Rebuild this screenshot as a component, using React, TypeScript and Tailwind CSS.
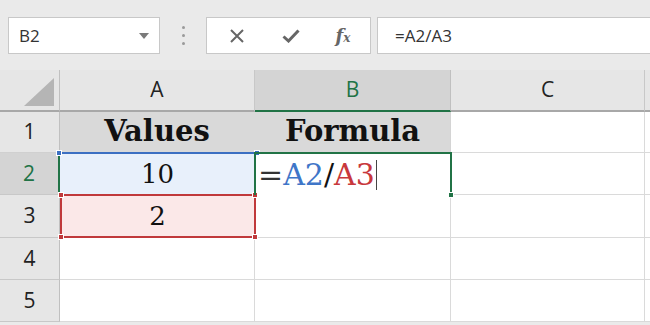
import React from "react";

const serif = { fontFamily: '"DejaVu Serif", "Liberation Serif", serif' };
const sans = { fontFamily: '"Open Sans", "Noto Sans", sans-serif' };

function Handle({ className }: { className: string }) {
  return <div className={`absolute w-[6px] h-[6px] border border-white ${className}`} />;
}

export default function App() {
  const rows = [42, 41, 42, 43, 42, 42];
  return (
    <div className="w-[650px] h-[325px] overflow-hidden bg-[#eaeaea] relative" style={sans}>
      {/* Top bar */}
      <div className="h-[70px] flex items-start pt-[17px]">
        <div className="ml-[8px] w-[152px] h-[37px] bg-white border border-[#c8c8c8] flex items-center justify-between pl-[10px] pr-[10px]">
          <span className="text-[17px] text-[#333]">B2</span>
          <svg width="10" height="6" viewBox="0 0 10 6"><path d="M0 0h10L5 6z" fill="#7a7a7a" /></svg>
        </div>
        <div className="w-[46px] h-[37px] flex flex-col items-center justify-center gap-[5px]">
          <div className="w-[3px] h-[3px] rounded-full bg-[#9a9a9a]" />
          <div className="w-[3px] h-[3px] rounded-full bg-[#9a9a9a]" />
          <div className="w-[3px] h-[3px] rounded-full bg-[#9a9a9a]" />
        </div>
        <div className="w-[165px] h-[37px] bg-white border border-[#c8c8c8] flex items-center">
          <div className="w-[58px] flex justify-center pl-[2px]">
            <svg width="14" height="14" viewBox="0 0 14 14"><path d="M1 1L13 13M13 1L1 13" stroke="#666" strokeWidth="2" /></svg>
          </div>
          <div className="w-[52px] flex justify-center">
            <svg width="18" height="14" viewBox="0 0 18 14"><path d="M1.5 7.5L6.5 12L16.5 1.5" stroke="#666" strokeWidth="3" fill="none" /></svg>
          </div>
          <div className="w-[52px] flex justify-center">
            <span className="text-[#666] italic font-bold text-[18px] leading-none" style={serif}>f<span className="text-[12px]">x</span></span>
          </div>
        </div>
        <div className="ml-[6px] flex-1 h-[37px] bg-white border border-[#c8c8c8] border-r-0 flex items-center pl-[17px]">
          <span className="text-[17px] text-[#333]">=A2/A3</span>
        </div>
      </div>

      {/* Grid */}
      <div className="relative">
        <div
          className="grid"
          style={{
            gridTemplateColumns: "60px 195px 196px 194px 1fr",
            gridTemplateRows: rows.map((r) => r + "px").join(" "),
          }}
        >
          {/* header row */}
          <div className="bg-[#e6e6e6] border-r border-[#c0c0c0] border-b-2 border-b-[#a8a8a8] relative">
            <svg className="absolute left-[24px] top-[8px]" width="30" height="28" viewBox="0 0 30 28"><path d="M30 0V28H0z" fill="#b5b5b5" /></svg>
          </div>
          <div className="bg-[#e6e6e6] border-r border-[#c8c8c8] border-b-2 border-b-[#a8a8a8] flex items-center justify-center text-[21px] text-[#222]">A</div>
          <div className="bg-[#d4d4d4] border-r border-[#c0c0c0] border-b-2 border-b-[#217346] flex items-center justify-center text-[21px] text-[#217346]">B</div>
          <div className="bg-[#e6e6e6] border-r border-[#c8c8c8] border-b-2 border-b-[#a8a8a8] flex items-center justify-center text-[21px] text-[#222]">C</div>
          <div className="bg-[#e6e6e6] border-b-2 border-b-[#a8a8a8]" />

          {/* row 1 */}
          <div className="bg-[#e6e6e6] border-r border-[#c0c0c0] border-b border-b-[#d0d0d0] flex items-center justify-center text-[21px] text-[#222]">1</div>
          <div className="bg-[#d9d9d9] border-r border-b border-[#d9d9d9] flex items-center justify-center text-[29px] font-bold text-[#111]" style={serif}>Values</div>
          <div className="bg-[#d9d9d9] border-r border-b border-[#d4d4d4] flex items-center justify-center text-[29px] font-bold text-[#111]" style={serif}>Formula</div>
          <div className="bg-white border-r border-b border-[#dadada]" />
          <div className="bg-white border-b border-[#dadada]" />

          {/* row 2 */}
          <div className="bg-[#d4d4d4] border-r-2 border-r-[#217346] border-b border-b-[#c8c8c8] flex items-center justify-center text-[21px] text-[#217346]">2</div>
          <div className="bg-[#e8f0fb] flex items-center justify-center text-[26px] text-[#111]" style={serif}>10</div>
          <div className="bg-white flex items-center pl-[3px] pt-[2px] text-[30px] leading-none" style={serif}>
            <span className="text-[#333]">=</span>
            <span className="text-[#3f76c8]">A2</span>
            <span className="text-[#111]">/</span>
            <span className="text-[#c8383c]">A3</span>
            <span className="inline-block w-[1px] h-[30px] bg-[#444] ml-[1px]" />
          </div>
          <div className="bg-white border-r border-b border-[#dadada]" />
          <div className="bg-white border-b border-[#dadada]" />

          {/* row 3 */}
          <div className="bg-[#e6e6e6] border-r border-[#c0c0c0] border-b border-b-[#c8c8c8] flex items-center justify-center text-[21px] text-[#222]">3</div>
          <div className="bg-[#fbe8e8] flex items-center justify-center text-[26px] text-[#111]" style={serif}>2</div>
          <div className="bg-white border-r border-b border-[#dadada]" />
          <div className="bg-white border-r border-b border-[#dadada]" />
          <div className="bg-white border-b border-[#dadada]" />

          {/* row 4 */}
          <div className="bg-[#e6e6e6] border-r border-[#c0c0c0] border-b border-b-[#c8c8c8] flex items-center justify-center text-[21px] text-[#222]">4</div>
          <div className="bg-white border-r border-b border-[#dadada]" />
          <div className="bg-white border-r border-b border-[#dadada]" />
          <div className="bg-white border-r border-b border-[#dadada]" />
          <div className="bg-white border-b border-[#dadada]" />

          {/* row 5 */}
          <div className="bg-[#e6e6e6] border-r border-[#c0c0c0] border-b border-b-[#c8c8c8] flex items-center justify-center text-[21px] text-[#222]">5</div>
          <div className="bg-white border-r border-b border-[#dadada]" />
          <div className="bg-white border-r border-b border-[#dadada]" />
          <div className="bg-white border-r border-b border-[#dadada]" />
          <div className="bg-white border-b border-[#dadada]" />
        </div>

        {/* Selection overlays */}
        <div className="absolute left-[60px] top-[82px] w-[196px] h-[43px] border-t-2 border-[#3b6fc2]">
          <Handle className="-left-[4px] -top-[4px] bg-[#3b6fc2]" />
          <Handle className="-right-[4px] -top-[4px] bg-[#3b6fc2]" />
        </div>
        <div className="absolute left-[60px] top-[124px] w-[196px] h-[44px] border-2 border-[#c0393b]">
          <Handle className="-left-[4px] -top-[4px] bg-[#c0393b]" />
          <Handle className="-right-[4px] -top-[4px] bg-[#c0393b]" />
          <Handle className="-left-[4px] -bottom-[4px] bg-[#c0393b]" />
          <Handle className="-right-[4px] -bottom-[4px] bg-[#c0393b]" />
        </div>
        <div className="absolute left-[254px] top-[82px] w-[198px] h-[43px] border-2 border-b-0 border-[#217346]">
          <Handle className="-right-[4px] -bottom-[3px] bg-[#217346]" />
        </div>
      </div>
    </div>
  );
}
